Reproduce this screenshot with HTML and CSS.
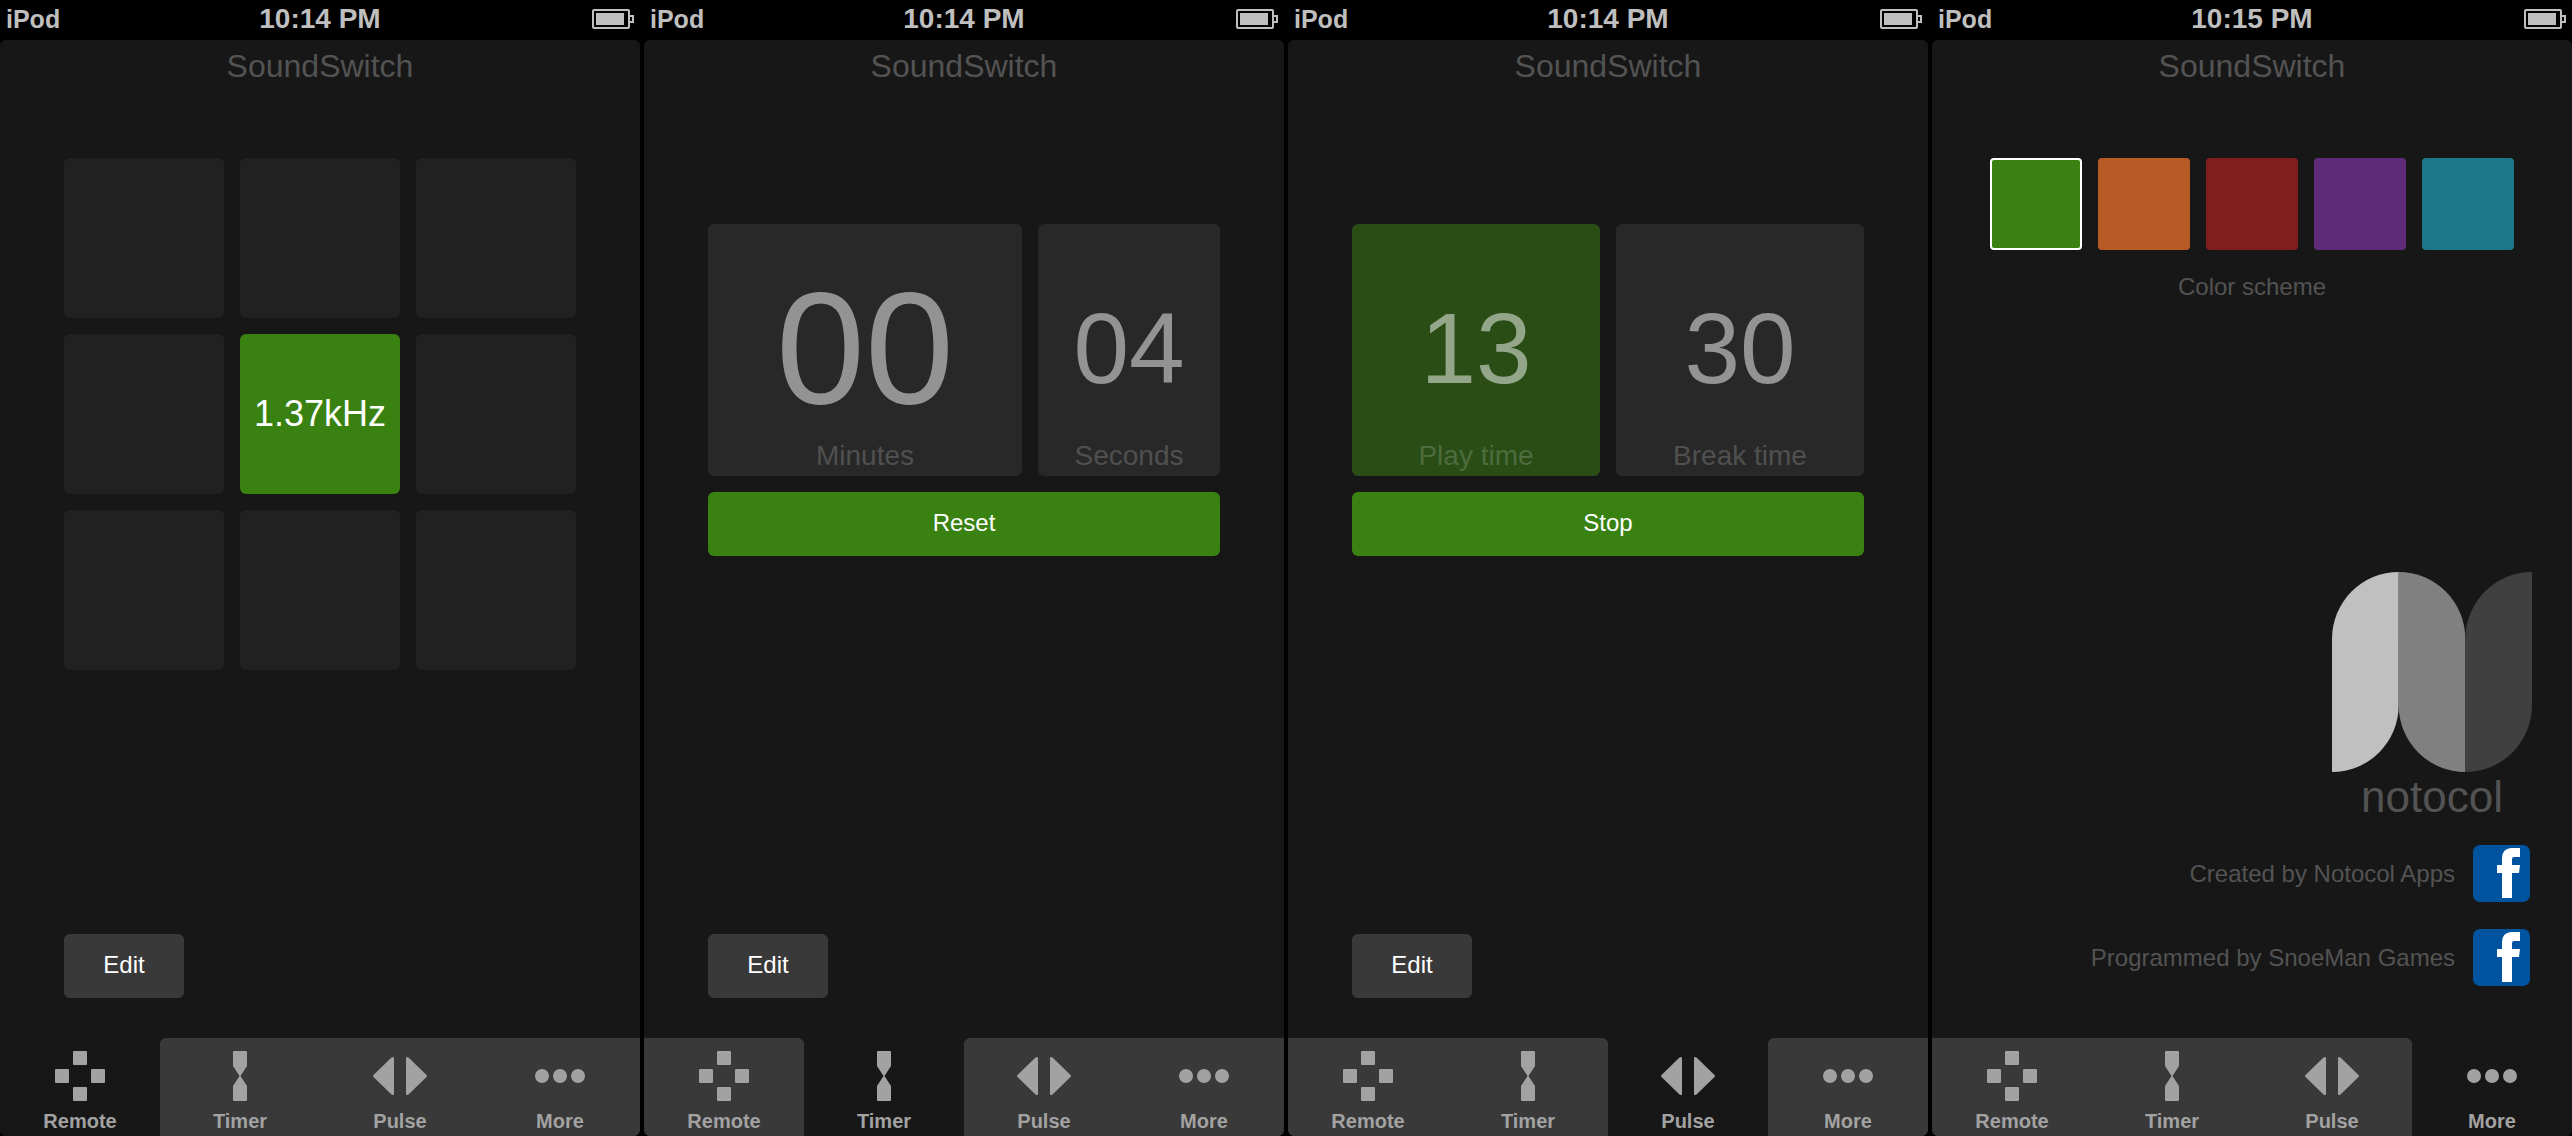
FILE: index.html
```html
<!DOCTYPE html>
<html lang="en">
<head>
<meta charset="utf-8">
<meta name="viewport" content="width=device-width, initial-scale=1">
<title>SoundSwitch</title>
<link rel="stylesheet" href="styles.css">
</head>
<body>
<svg class="sprite" aria-hidden="true">
  <symbol id="battery" viewBox="0 0 42 20">
    <rect x="1" y="1" width="36" height="18" rx="1" fill="none" stroke="currentColor" stroke-width="2"/>
    <rect x="4" y="4" width="28" height="12" fill="currentColor"/>
    <path d="M38 7h3v6h-3" fill="none" stroke="currentColor" stroke-width="2"/>
  </symbol>
  <symbol id="remote" viewBox="0 0 50 50">
    <g fill="currentColor">
      <rect x="18" width="14" height="14" rx="1"/><rect y="18" width="14" height="14" rx="1"/>
      <rect x="36" y="18" width="14" height="14" rx="1"/><rect x="18" y="36" width="14" height="14" rx="1"/>
    </g>
  </symbol>
  <symbol id="timer" viewBox="0 0 50 50">
    <path d="M19 0h12q1 0 1 1v14l-6.500 10L32 35v14q0 1-1 1H19q-1 0-1-1V35l6.500-10L18 15V1q0-1 1-1z" fill="currentColor"/>
  </symbol>
  <symbol id="pulse" viewBox="0 0 54 50">
    <path d="M18.500 6.500Q21 5 21 7.500v35q0 2.500-2.500 1L.500 26q-.800-1 0-2zM35.500 6.500Q33 5 33 7.500v35q0 2.500 2.500 1L53.500 26q.800-1 0-2z" fill="currentColor"/>
  </symbol>
  <symbol id="more" viewBox="0 0 50 50">
    <g fill="currentColor"><circle cx="7" cy="25" r="7"/><circle cx="25" cy="25" r="7"/><circle cx="43" cy="25" r="7"/></g>
  </symbol>
  <symbol id="facebook" viewBox="0 0 57 57">
    <rect width="57" height="57" rx="7" fill="#00549f"/>
    <path d="M29 53V28h-5v-8h5v-7q0-9 9-10h9v9h-6q-2 0-2 2v6h8l-1 8h-7v25z" fill="#fff"/>
  </symbol>
</svg>

<main class="screens">
  <section class="screen">
    <div class="status"><span class="device">iPod</span><time class="clock">10:14 PM</time><svg class="battery"><use href="#battery"/></svg></div>
    <div class="panel">
      <h1 class="title">SoundSwitch</h1>
      <div class="pads">
        <button class="pad" aria-label="Pad 1"></button><button class="pad" aria-label="Pad 2"></button><button class="pad" aria-label="Pad 3"></button>
        <button class="pad" aria-label="Pad 4"></button><button class="pad playing">1.37kHz</button><button class="pad" aria-label="Pad 6"></button>
        <button class="pad" aria-label="Pad 7"></button><button class="pad" aria-label="Pad 8"></button><button class="pad" aria-label="Pad 9"></button>
      </div>
      <button class="button edit">Edit</button>
      <nav class="tabs">
        <a class="tab selected" href="#"><svg class="icon"><use href="#remote"/></svg>Remote</a>
        <a class="tab" href="#"><svg class="icon"><use href="#timer"/></svg>Timer</a>
        <a class="tab" href="#"><svg class="icon wide"><use href="#pulse"/></svg>Pulse</a>
        <a class="tab" href="#"><svg class="icon"><use href="#more"/></svg>More</a>
      </nav>
    </div>
  </section>

  <section class="screen">
    <div class="status"><span class="device">iPod</span><time class="clock">10:14 PM</time><svg class="battery"><use href="#battery"/></svg></div>
    <div class="panel">
      <h1 class="title">SoundSwitch</h1>
      <div class="counter">
        <div class="cards minutes-seconds">
          <div class="card"><span class="number large">00</span><span class="caption">Minutes</span></div>
          <div class="card"><span class="number">04</span><span class="caption">Seconds</span></div>
        </div>
        <button class="button primary">Reset</button>
      </div>
      <button class="button edit">Edit</button>
      <nav class="tabs">
        <a class="tab before" href="#"><svg class="icon"><use href="#remote"/></svg>Remote</a>
        <a class="tab selected" href="#"><svg class="icon"><use href="#timer"/></svg>Timer</a>
        <a class="tab" href="#"><svg class="icon wide"><use href="#pulse"/></svg>Pulse</a>
        <a class="tab" href="#"><svg class="icon"><use href="#more"/></svg>More</a>
      </nav>
    </div>
  </section>

  <section class="screen">
    <div class="status"><span class="device">iPod</span><time class="clock">10:14 PM</time><svg class="battery"><use href="#battery"/></svg></div>
    <div class="panel">
      <h1 class="title">SoundSwitch</h1>
      <div class="counter">
        <div class="cards">
          <div class="card active"><span class="number">13</span><span class="caption">Play time</span></div>
          <div class="card"><span class="number">30</span><span class="caption">Break time</span></div>
        </div>
        <button class="button primary">Stop</button>
      </div>
      <button class="button edit">Edit</button>
      <nav class="tabs">
        <a class="tab" href="#"><svg class="icon"><use href="#remote"/></svg>Remote</a>
        <a class="tab before" href="#"><svg class="icon"><use href="#timer"/></svg>Timer</a>
        <a class="tab selected" href="#"><svg class="icon wide"><use href="#pulse"/></svg>Pulse</a>
        <a class="tab" href="#"><svg class="icon"><use href="#more"/></svg>More</a>
      </nav>
    </div>
  </section>

  <section class="screen">
    <div class="status"><span class="device">iPod</span><time class="clock">10:15 PM</time><svg class="battery"><use href="#battery"/></svg></div>
    <div class="panel">
      <h1 class="title">SoundSwitch</h1>
      <div class="swatches" role="radiogroup" aria-labelledby="scheme">
        <input class="swatch green" type="radio" name="scheme" aria-label="Green" checked>
        <input class="swatch orange" type="radio" name="scheme" aria-label="Orange">
        <input class="swatch red" type="radio" name="scheme" aria-label="Red">
        <input class="swatch purple" type="radio" name="scheme" aria-label="Purple">
        <input class="swatch teal" type="radio" name="scheme" aria-label="Teal">
      </div>
      <p class="scheme" id="scheme">Color scheme</p>
      <div class="about">
        <div class="brand">
          <svg class="logo" viewBox="0 0 198 198" aria-hidden="true">
            <path d="M66 0v132A66 66 0 0 1 0 198V66A66 66 0 0 1 66 0z" fill="#c0c0c0"/>
            <path d="M66 0a66 66 0 0 1 66 66v132a66 66 0 0 1-66-66z" fill="#808080"/>
            <path d="M198 0v132a66 66 0 0 1-66 66V66a66 66 0 0 1 66-66z" fill="#404040"/>
          </svg>
          <span class="brand-name">notocol</span>
        </div>
        <p class="credit">Created by Notocol Apps <a href="#" aria-label="Notocol Apps on Facebook"><svg class="facebook"><use href="#facebook"/></svg></a></p>
        <p class="credit">Programmed by SnoeMan Games <a href="#" aria-label="SnoeMan Games on Facebook"><svg class="facebook"><use href="#facebook"/></svg></a></p>
      </div>
      <nav class="tabs">
        <a class="tab" href="#"><svg class="icon"><use href="#remote"/></svg>Remote</a>
        <a class="tab" href="#"><svg class="icon"><use href="#timer"/></svg>Timer</a>
        <a class="tab before" href="#"><svg class="icon wide"><use href="#pulse"/></svg>Pulse</a>
        <a class="tab selected" href="#"><svg class="icon"><use href="#more"/></svg>More</a>
      </nav>
    </div>
  </section>
</main>
</body>
</html>
```
FILE: styles.css
```css
* { box-sizing: border-box; }

body {
  margin: 0;
  background: #000;
  color: #535353;
  font: 24px/28px "Liberation Sans", Arial, sans-serif;
}

button { border: 0; padding: 0; font: inherit; color: #fff; }
svg { display: block; }
.sprite { display: none; }

.screens {
  display: grid;
  grid-template-columns: repeat(4, 1fr);
  gap: 4px;
  min-height: 100vh;
}

.screen { display: flex; flex-direction: column; }

/* Status bar */
.status {
  display: grid;
  grid-template-columns: 1fr auto 1fr;
  align-items: center;
  height: 40px;
  padding: 0 6px 2px;
  color: #bfbfbf;
  font-weight: bold;
}
.device { font-size: 25px; }
.clock { font-size: 28px; }
.battery { width: 42px; height: 20px; justify-self: end; }

.panel {
  display: flex;
  flex-direction: column;
  flex: 1;
  overflow: hidden;
  border-radius: 6px;
  background: #171717;
}

.title {
  margin: 0 0 74px;
  padding-top: 8px;
  font-size: 32px;
  line-height: 36px;
  font-weight: normal;
  text-align: center;
}

/* Remote */
.pads {
  display: grid;
  grid-template-columns: repeat(3, 1fr);
  gap: 16px;
  margin: 0 64px;
}
.pad {
  aspect-ratio: 1;
  border-radius: 6px;
  background: #212121;
  font-size: 36px;
}
.pad.playing { background: #398212; }

/* Timer and pulse */
.counter {
  display: grid;
  gap: 16px;
  margin: 66px 64px 0;
}
.cards {
  display: grid;
  grid-template-columns: 1fr 1fr;
  gap: 16px;
}
.minutes-seconds { grid-template-columns: 157fr 91fr; }
.card {
  display: flex;
  flex-direction: column;
  align-items: center;
  height: 252px;
  padding: 32px 0 4px;
  border-radius: 6px;
  background: #282828;
  color: #939393;
}
.number {
  display: flex;
  align-items: center;
  flex: 1;
  font-size: 100px;
}
.number.large { font-size: 160px; }
.caption { font-size: 28px; line-height: 32px; color: #505050; }
.card.active { background: #294d15; color: #94a68a; }
.card.active .caption { color: #4e6c3e; }

.button {
  height: 64px;
  padding-bottom: 2px;
  border-radius: 6px;
  background: #393939;
}
.button.primary { background: #398212; }
.button.edit { width: 120px; margin: auto 0 40px 64px; }

/* Colour scheme */
.swatches {
  display: grid;
  grid-template-columns: repeat(5, 1fr);
  gap: 16px;
  margin: 0 58px;
}
.swatch {
  appearance: none;
  aspect-ratio: 1;
  margin: 0;
  border-radius: 4px;
}
.swatch:checked { border: 2px solid #fff; }
.green { background: #398212; }
.orange { background: #b85a26; }
.red { background: #801d1f; }
.purple { background: #5d2b78; }
.teal { background: #1d778a; }
.scheme { margin: 23px 0 0; text-align: center; }

/* Credits */
.about {
  display: flex;
  flex-direction: column;
  align-items: flex-end;
  gap: 27px;
  margin: auto 42px 52px 0;
}
.brand {
  display: flex;
  flex-direction: column;
  align-items: center;
  margin: 0 -2px -4px 0;
}
.logo { width: 200px; height: 200px; }
.brand-name { font-size: 44px; line-height: 50px; }
.credit {
  display: flex;
  align-items: center;
  gap: 18px;
  margin: 0;
}
.facebook { width: 57px; height: 57px; }

/* Tab bar */
.tabs { display: grid; grid-template-columns: repeat(4, 1fr); }
.tab {
  display: flex;
  flex-direction: column;
  align-items: center;
  gap: 8px;
  padding: 13px 0 3px;
  background: #393939;
  color: #a2a2a2;
  font-size: 20px;
  line-height: 24px;
  font-weight: bold;
  text-decoration: none;
}
.tab.selected { background: #171717; }
.tab.before { border-top-right-radius: 6px; }
.tab.selected + .tab { border-top-left-radius: 6px; }
.icon { width: 50px; height: 50px; }
.icon.wide { width: 54px; }
```
